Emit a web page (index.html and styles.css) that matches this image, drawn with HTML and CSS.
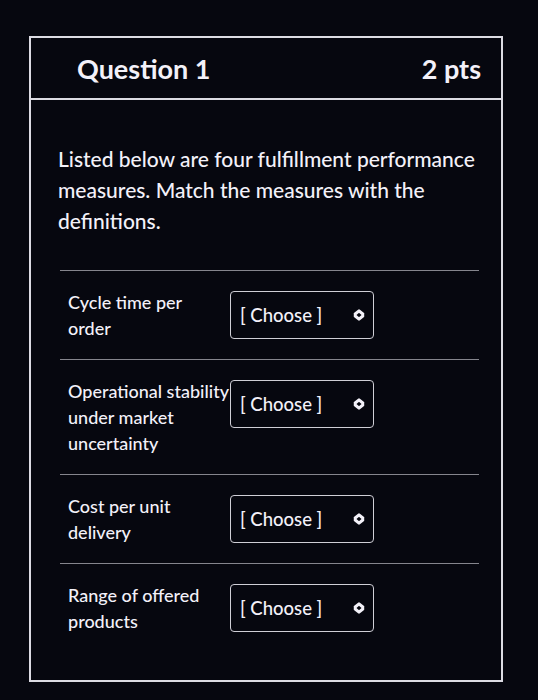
FILE: index.html
```html
<!DOCTYPE html>
<html lang="en">
<head>
<meta charset="utf-8">
<title>Question 1</title>
<link rel="stylesheet" href="styles.css">
</head>
<body>
<div class="page">
  <section class="question">
    <header class="q-header">
      <h2 class="q-title">Question 1</h2>
      <span class="q-points">2 pts</span>
    </header>
    <div class="q-body">
      <p class="q-text">Listed below are four fulfillment performance measures. Match the measures with the definitions.</p>
      <div class="match-list">
        <div class="match-row">
          <div class="match-label">Cycle time per order</div>
          <div class="select"><span class="select-text">[ Choose ]</span><svg class="select-icon" viewBox="0 0 12 12" width="12" height="12"><polyline points="2.2,5 6,1.8 9.8,5"/><polyline points="2.2,7 6,10.2 9.8,7"/></svg></div>
        </div>
        <div class="match-row">
          <div class="match-label"><span class="nowrap">Operational stability</span> under market uncertainty</div>
          <div class="select"><span class="select-text">[ Choose ]</span><svg class="select-icon" viewBox="0 0 12 12" width="12" height="12"><polyline points="2.2,5 6,1.8 9.8,5"/><polyline points="2.2,7 6,10.2 9.8,7"/></svg></div>
        </div>
        <div class="match-row">
          <div class="match-label">Cost per unit delivery</div>
          <div class="select"><span class="select-text">[ Choose ]</span><svg class="select-icon" viewBox="0 0 12 12" width="12" height="12"><polyline points="2.2,5 6,1.8 9.8,5"/><polyline points="2.2,7 6,10.2 9.8,7"/></svg></div>
        </div>
        <div class="match-row">
          <div class="match-label">Range of offered products</div>
          <div class="select"><span class="select-text">[ Choose ]</span><svg class="select-icon" viewBox="0 0 12 12" width="12" height="12"><polyline points="2.2,5 6,1.8 9.8,5"/><polyline points="2.2,7 6,10.2 9.8,7"/></svg></div>
        </div>
      </div>
    </div>
  </section>
</div>
</body>
</html>
```

FILE: styles.css
```css
html, body {
  margin: 0;
  padding: 0;
  background: #06070f;
}

body {
  font-family: Lato, "Open Sans", sans-serif;
  color: #f3f1f9;
}

.page {
  padding: 36px 0 0 29px;
}

.question {
  width: 474px;
  border: 2px solid #dcdbe3;
  box-sizing: border-box;
}

.q-header {
  height: 62px;
  box-sizing: border-box;
  display: flex;
  align-items: center;
  justify-content: space-between;
  padding: 0 20px 0 46px;
  border-bottom: 2px solid #dcdbe3;
}

.q-title {
  margin: 0;
  font-size: 27px;
  font-weight: 700;
}

.q-points {
  font-size: 27px;
  font-weight: 700;
}

.q-body {
  padding: 43px 22px 28px 27px;
}

.q-text {
  margin: 0 0 34px 0;
  font-size: 21px;
  font-weight: 500;
  line-height: 31px;
}

.match-list {
  border-top: 1px solid #85858d;
  margin-left: 2px;
}

.match-row {
  display: flex;
  align-items: flex-start;
  padding: 18px 0 18px 8px;
  border-bottom: 1px solid #85858d;
}

.match-row:last-child {
  border-bottom: none;
}

.match-label {
  width: 154px;
  flex: none;
  font-size: 18px;
  font-weight: 500;
  line-height: 26px;
}

.nowrap {
  white-space: nowrap;
}

.select {
  width: 144px;
  height: 48px;
  margin: 2px 0 0 8px;
  box-sizing: border-box;
  border: 1px solid #cfced6;
  border-radius: 4px;
  display: flex;
  align-items: center;
  justify-content: space-between;
  padding: 0 8px 0 9px;
  font-size: 18.5px;
  font-weight: 500;
}

.select-icon {
  fill: none;
  stroke: #f3f1f9;
  stroke-width: 3;
  stroke-linecap: round;
  stroke-linejoin: round;
}
```
